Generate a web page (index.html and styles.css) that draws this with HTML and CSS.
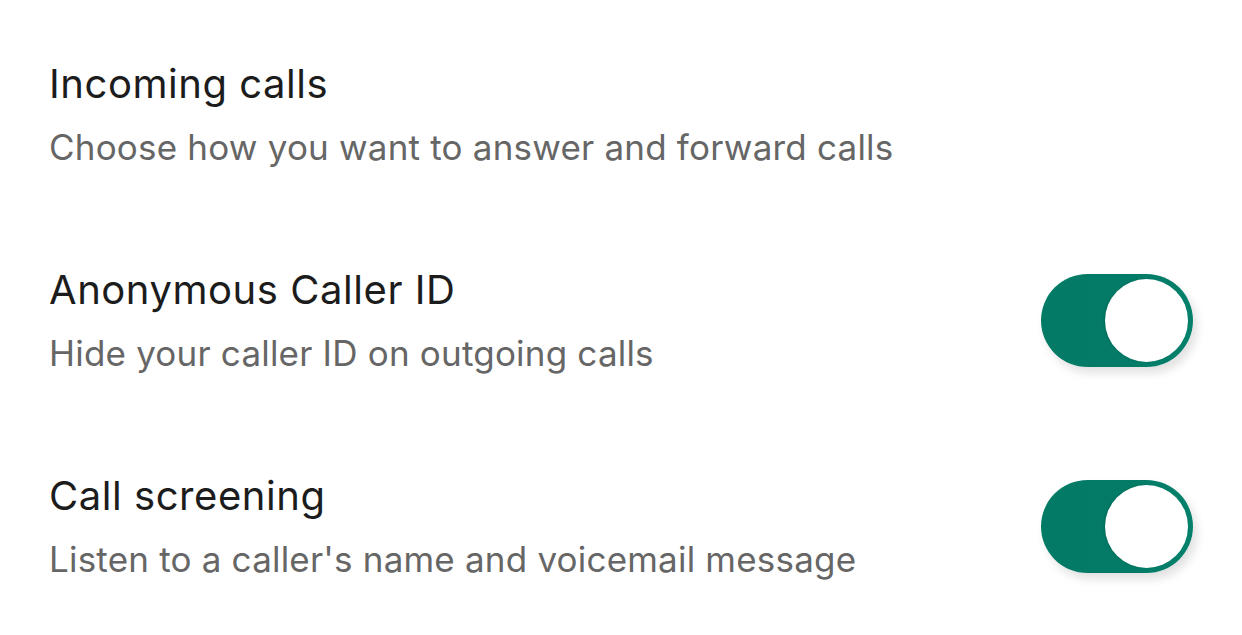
FILE: index.html
```html
<!DOCTYPE html>
<html>
<head>
<meta charset="utf-8">
<link rel="stylesheet" href="styles.css">
</head>
<body>
<div class="list">
  <div class="row">
    <div class="text">
      <div class="title">Incoming calls</div>
      <div class="sub">Choose how you want to answer and forward calls</div>
    </div>
  </div>
  <div class="row">
    <div class="text">
      <div class="title">Anonymous Caller ID</div>
      <div class="sub">Hide your caller ID on outgoing calls</div>
    </div>
    <div class="switch"><div class="knob"></div></div>
  </div>
  <div class="row">
    <div class="text">
      <div class="title">Call screening</div>
      <div class="sub">Listen to a caller's name and voicemail message</div>
    </div>
    <div class="switch"><div class="knob"></div></div>
  </div>
</div>
</body>
</html>
```
FILE: styles.css
```css
html, body {
  margin: 0;
  padding: 0;
  background: #ffffff;
}
body {
  font-family: Inter, "Liberation Sans", sans-serif;
  width: 1242px;
  height: 635px;
  overflow: hidden;
}
.list {
  display: flex;
  flex-direction: column;
  padding: 60px 49px 0 49px;
  gap: 98px;
}
.row {
  display: flex;
  align-items: center;
  justify-content: space-between;
}
.text {
  display: flex;
  flex-direction: column;
  gap: 18px;
}
.title {
  font-size: 40px;
  line-height: 48px;
  color: #1c1c1c;
  letter-spacing: 0.55px;
}
.sub {
  font-size: 35px;
  line-height: 42px;
  color: #666666;
  letter-spacing: 0.2px;
}
.switch {
  width: 152px;
  height: 93px;
  border-radius: 47px;
  background: linear-gradient(90deg, #027a65 0%, #037b67 60%, #04806b 100%);
  display: flex;
  align-items: center;
  justify-content: flex-end;
  padding: 0 5px;
  box-sizing: border-box;
  box-shadow: 4px 6px 10px rgba(0, 0, 0, 0.12);
}
.knob {
  width: 83px;
  height: 83px;
  border-radius: 50%;
  background: #ffffff;
  box-shadow: -1px 0 2px rgba(0, 0, 0, 0.12);
}
```
